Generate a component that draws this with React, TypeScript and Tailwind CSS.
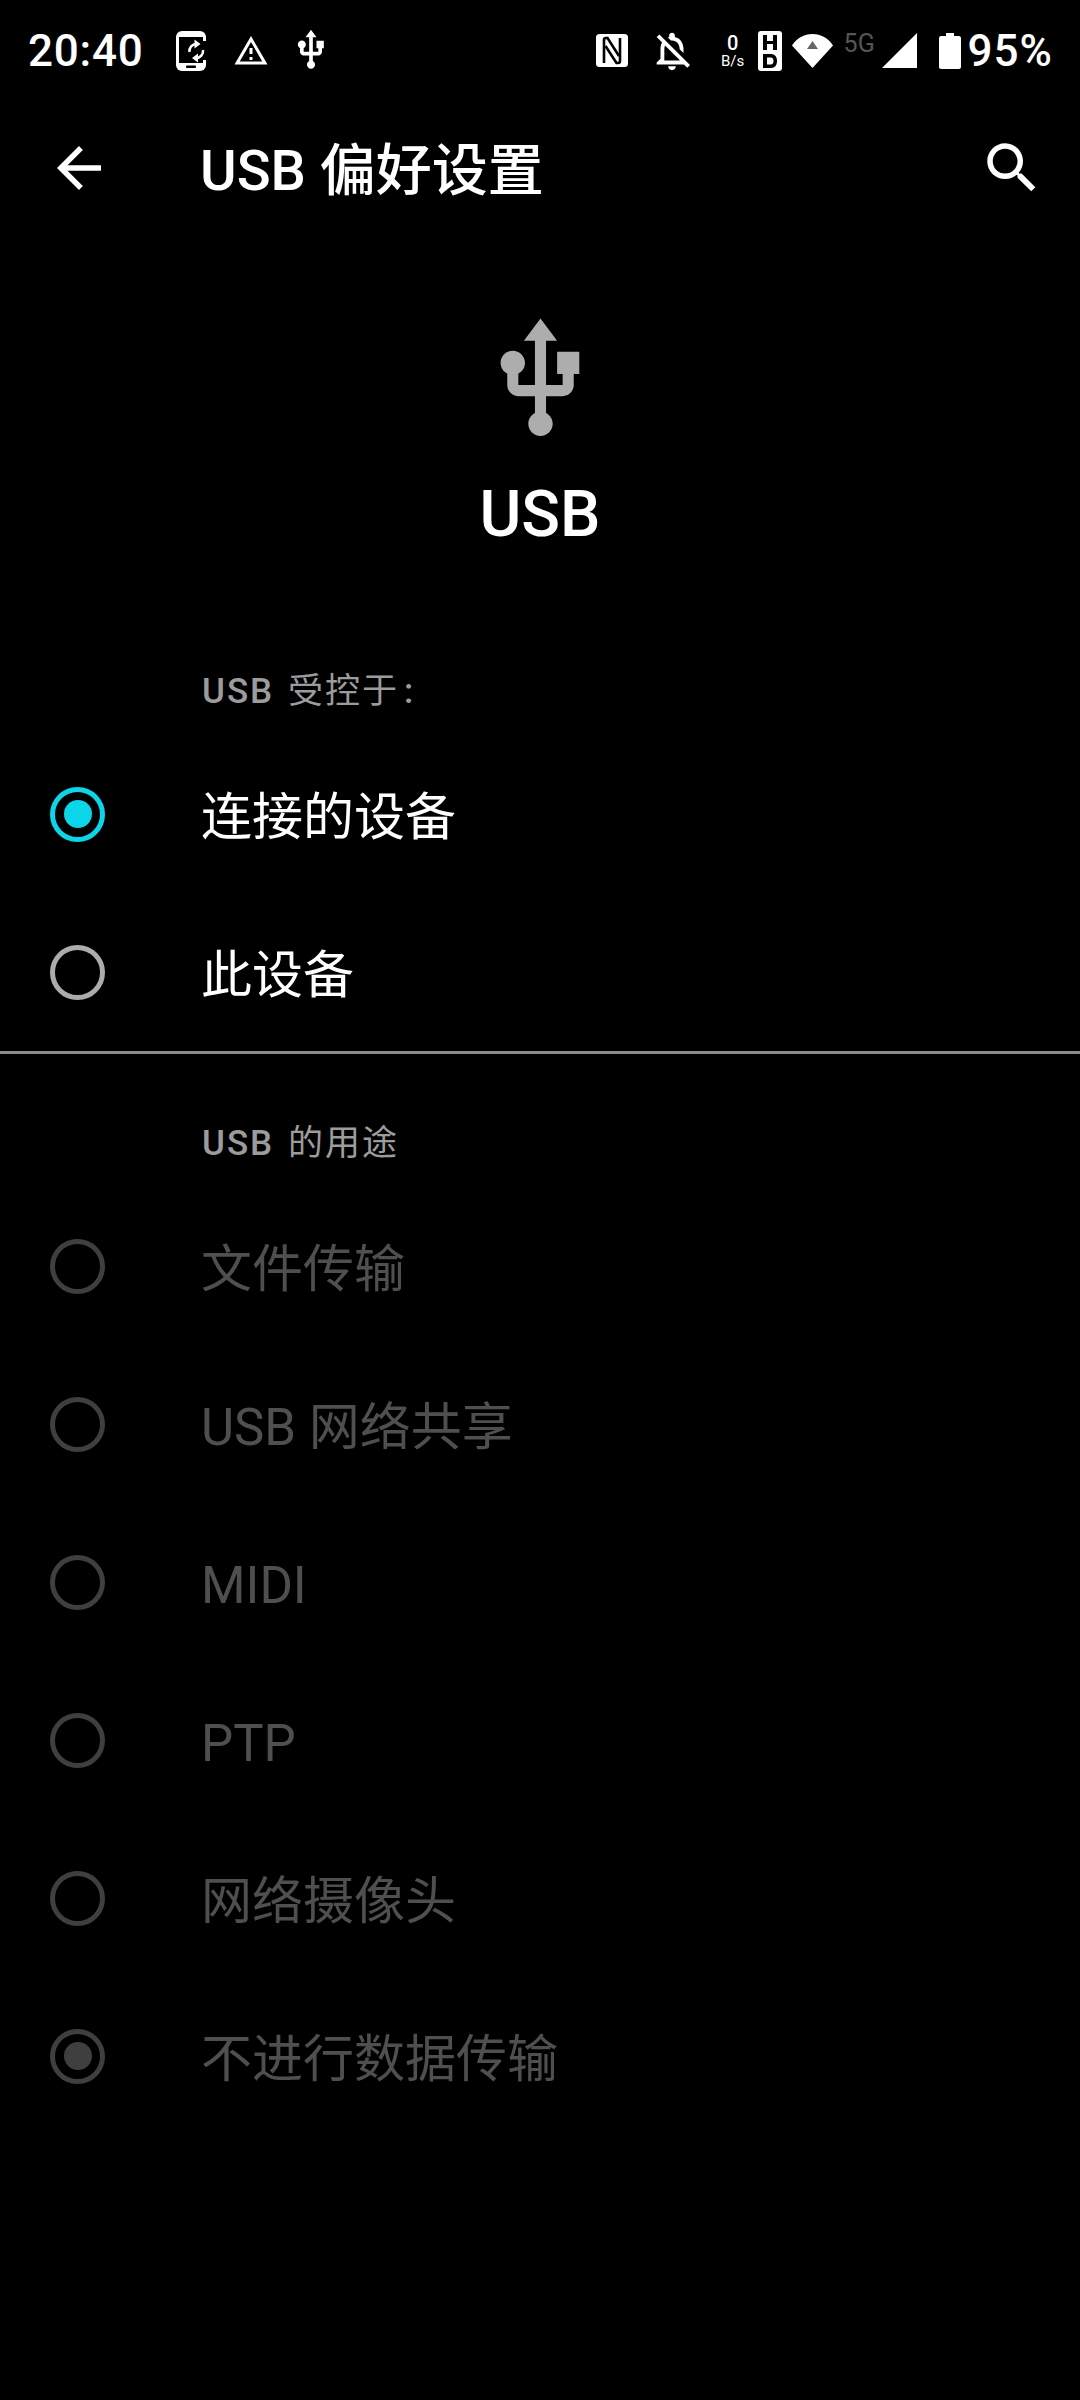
const font = "font-['Roboto','Noto_Sans_CJK_SC',sans-serif]";

const usbPath =
  "M15 7v4h1v2h-3V5h2l-3-4-3 4h2v8H8v-2.07c.7-.37 1.2-1.08 1.2-1.93 0-1.21-.99-2.2-2.2-2.2-1.21 0-2.2.99-2.2 2.2 0 .85.5 1.56 1.2 1.93V13c0 1.11.89 2 2 2h3v3.05c-.71.37-1.2 1.1-1.2 1.95 0 1.22.99 2.2 2.2 2.2 1.21 0 2.2-.98 2.2-2.2 0-.85-.49-1.58-1.2-1.95V15h3c1.11 0 2-.89 2-2v-2h1V7h-4z";

const Radio = ({ checked, tone }: { checked?: boolean; tone: string }) => {
  const border =
    tone === "accent" ? "border-[#0bd5e8]" : tone === "muted" ? "border-[#acacac]" : "border-[#3f3f3f]";
  const dot = tone === "accent" ? "bg-[#0bd5e8]" : "bg-[#3f3f3f]";
  return (
    <div className={`flex h-[55px] w-[55px] shrink-0 items-center justify-center rounded-full border-[5px] ${border}`}>
      {checked && <div className={`h-[28px] w-[28px] rounded-full ${dot}`} />}
    </div>
  );
};

const Row = ({ label, checked, tone }: { label: string; checked?: boolean; tone: string }) => (
  <div className="flex h-[158px] items-center pl-[50px]">
    <Radio checked={checked} tone={tone} />
    <span
      className={`ml-[96px] pt-[6px] text-[51px] leading-none ${tone === "disabled" ? "text-[#4f4f4f]" : "text-white"}`}
    >
      {label}
    </span>
  </div>
);

const SectionTitle = ({ children, colon }: { children: string; colon?: boolean }) => (
  <div className="pl-[202px] text-[35px] leading-[40px] tracking-[2px] text-[#9c9c9c] [word-spacing:3px]">
    <span className="font-medium">USB</span> {children}
    {colon && <span className="ml-[5px] font-medium">:</span>}
  </div>
);

const StatusLeft = () => (
  <div className="flex items-center">
    <span className="w-[146px] pl-[28px] text-[44px] font-medium leading-none tracking-[0.8px] text-white">20:40</span>
    <svg className="ml-[30px]" width="30" height="40" viewBox="0 0 30 40">
      <rect width="30" height="40" rx="6" fill="#fff" />
      <rect x="3" y="6" width="24" height="26" fill="#000" />
      <rect x="22" y="10" width="8" height="19" fill="#000" />
      <rect x="10" y="34.500" width="10" height="2.500" rx="1" fill="#000" />
      <path d="M13.500 21a7 7 0 0 1 7-8" fill="none" stroke="#fff" strokeWidth="2.500" />
      <path d="M27 19a7 7 0 0 1-7 8" fill="none" stroke="#fff" strokeWidth="2.500" />
      <path d="M18.500 8.500l6 4.500-6 4.500zM22 22.500l-6 4.500 6 4.500z" fill="#fff" />
    </svg>
    <svg className="ml-[27px]" width="36" height="36" viewBox="0 0 24 24" fill="#fff">
      <path d="M12 5.990L19.530 19H4.470L12 5.990M12 2L1 21h22L12 2zm1 14h-2v2h2v-2zm0-6h-2v4h2v-4z" />
    </svg>
    <svg className="mb-[2px] ml-[20px]" width="44" height="44" viewBox="0 0 24 24" fill="#fff">
      <path d={usbPath} />
    </svg>
  </div>
);

const StatusRight = () => (
  <div className="flex items-center pr-[27px]">
    <svg width="32" height="33" viewBox="0 0 32 33">
      <rect width="32" height="33" rx="3.500" fill="#fff" />
      <path d="M8 29V6a2 2 0 0 1 2-2h1.500L23 22" fill="none" stroke="#000" strokeWidth="2.600" />
      <path d="M24 4v23a2 2 0 0 1-2 2h-1.500L9.500 12" fill="none" stroke="#000" strokeWidth="2.600" />
    </svg>
    <svg className="ml-[21px]" width="46" height="46" viewBox="0 0 24 24" fill="#fff">
      <path d="M12 22c1.100 0 2-.9 2-2h-4c0 1.100.9 2 2 2zm0-15.500c2.490 0 4 2.020 4 4.500v.1l2 2V11c0-3.070-1.630-5.640-4.500-6.320V4c0-.83-.67-1.500-1.500-1.500s-1.500.67-1.500 1.500v.68c-.24.06-.47.15-.69.23l1.640 1.640c.18-.02.36-.05.55-.05zM5.410 3.350L4 4.760l2.810 2.810C6.290 8.570 6 9.740 6 11v5l-2 2v1h14.240l1.740 1.740 1.410-1.410L5.410 3.350zM16 17H8v-6c0-.68.12-1.320.34-1.900L16 16.760V17z" />
    </svg>
    <div className="ml-[26px] flex w-[24px] flex-col items-center text-white">
      <span className="text-[20px] font-medium leading-[21px]">0</span>
      <span className="whitespace-nowrap text-[15px] leading-[15px]">B/s</span>
    </div>
    <svg className="ml-[13px]" width="24" height="40" viewBox="0 0 24 40">
      <rect width="24" height="40" rx="3" fill="#fff" />
      <path d="M5 4h4v6h6V4h4v15h-4v-6H9v6H5zM5 23h8c4 0 6 3 6 7s-2 7-6 7H5zm4 3.500v7h4c1.500 0 2.500-1.500 2.500-3.500s-1-3.500-2.500-3.500z" fill="#000" />
    </svg>
    <svg className="ml-[10px]" width="41" height="34" viewBox="0 0 41 34">
      <path d="M0 11.500C5 4 12 0 20.500 0S36 4 41 11.500L20.500 34z" fill="#fff" />
      <path d="M20.500 7l5.500 8H15z" fill="#666" />
    </svg>
    <span className="mb-[14px] ml-[11px] w-[33px] text-[25px] leading-none text-[#555]">5G</span>
    <svg className="ml-[5px]" width="35" height="35" viewBox="0 0 35 35">
      <path d="M35 0v35H0z" fill="#fff" />
    </svg>
    <svg className="ml-[22px]" width="22" height="36" viewBox="0 0 22 36">
      <path d="M7 0h8v3h5c1 0 2 1 2 2v29c0 1-1 2-2 2H2c-1 0-2-1-2-2V5c0-1 1-2 2-2h5z" fill="#fff" />
    </svg>
    <span className="ml-[7px] text-[44px] font-medium leading-none tracking-[1px] text-white">95%</span>
  </div>
);

export default function App() {
  return (
    <div className={`flex min-h-[2400px] w-[1080px] flex-col bg-black ${font}`}>
      <div className="flex h-[96px] items-center justify-between pt-[5px]">
        <StatusLeft />
        <StatusRight />
      </div>

      <div className="flex h-[144px] items-center pl-[46px] pr-[35px]">
        <svg width="66" height="66" viewBox="0 0 24 24" fill="#fff">
          <path d="M20 11H7.830l5.590-5.590L12 4l-8 8 8 8 1.410-1.410L7.830 13H20v-2z" />
        </svg>
        <h1 className="ml-[88px] flex-1 pt-[6px] text-[56px] font-medium leading-none text-white">USB 偏好设置</h1>
        <svg width="66" height="66" viewBox="0 0 24 24" fill="#fff">
          <path d="M15.500 14h-.79l-.28-.27C15.410 12.590 16 11.110 16 9.500 16 5.910 13.090 3 9.500 3S3 5.910 3 9.500 5.910 16 9.500 16c1.610 0 3.090-.59 4.230-1.570l.27.28v.79l5 4.990L20.490 19l-4.990-5zm-6 0C7.010 14 5 11.990 5 9.500S7.010 5 9.500 5 14 7.010 14 9.500 11.990 14 9.500 14z" />
        </svg>
      </div>

      <div className="flex flex-col items-center pt-[73px]">
        <svg width="133" height="133" viewBox="0 0 24 24" fill="#adadad">
          <path d={usbPath} />
        </svg>
        <div className="mt-[29px] text-[64px] font-medium leading-[80px] text-white">USB</div>
      </div>

      <div className="pt-[117px]">
        <SectionTitle colon>受控于</SectionTitle>
      </div>
      <div className="mt-[23px]">
        <Row label="连接的设备" checked tone="accent" />
        <Row label="此设备" tone="muted" />
      </div>
      <div className="h-[3px] bg-[#8c8c8c]" />

      <div className="pt-[70px]">
        <SectionTitle>的用途</SectionTitle>
      </div>
      <div className="mt-[23px]">
        <Row label="文件传输" tone="disabled" />
        <Row label="USB 网络共享" tone="disabled" />
        <Row label="MIDI" tone="disabled" />
        <Row label="PTP" tone="disabled" />
        <Row label="网络摄像头" tone="disabled" />
        <Row label="不进行数据传输" checked tone="disabled" />
      </div>
    </div>
  );
}
